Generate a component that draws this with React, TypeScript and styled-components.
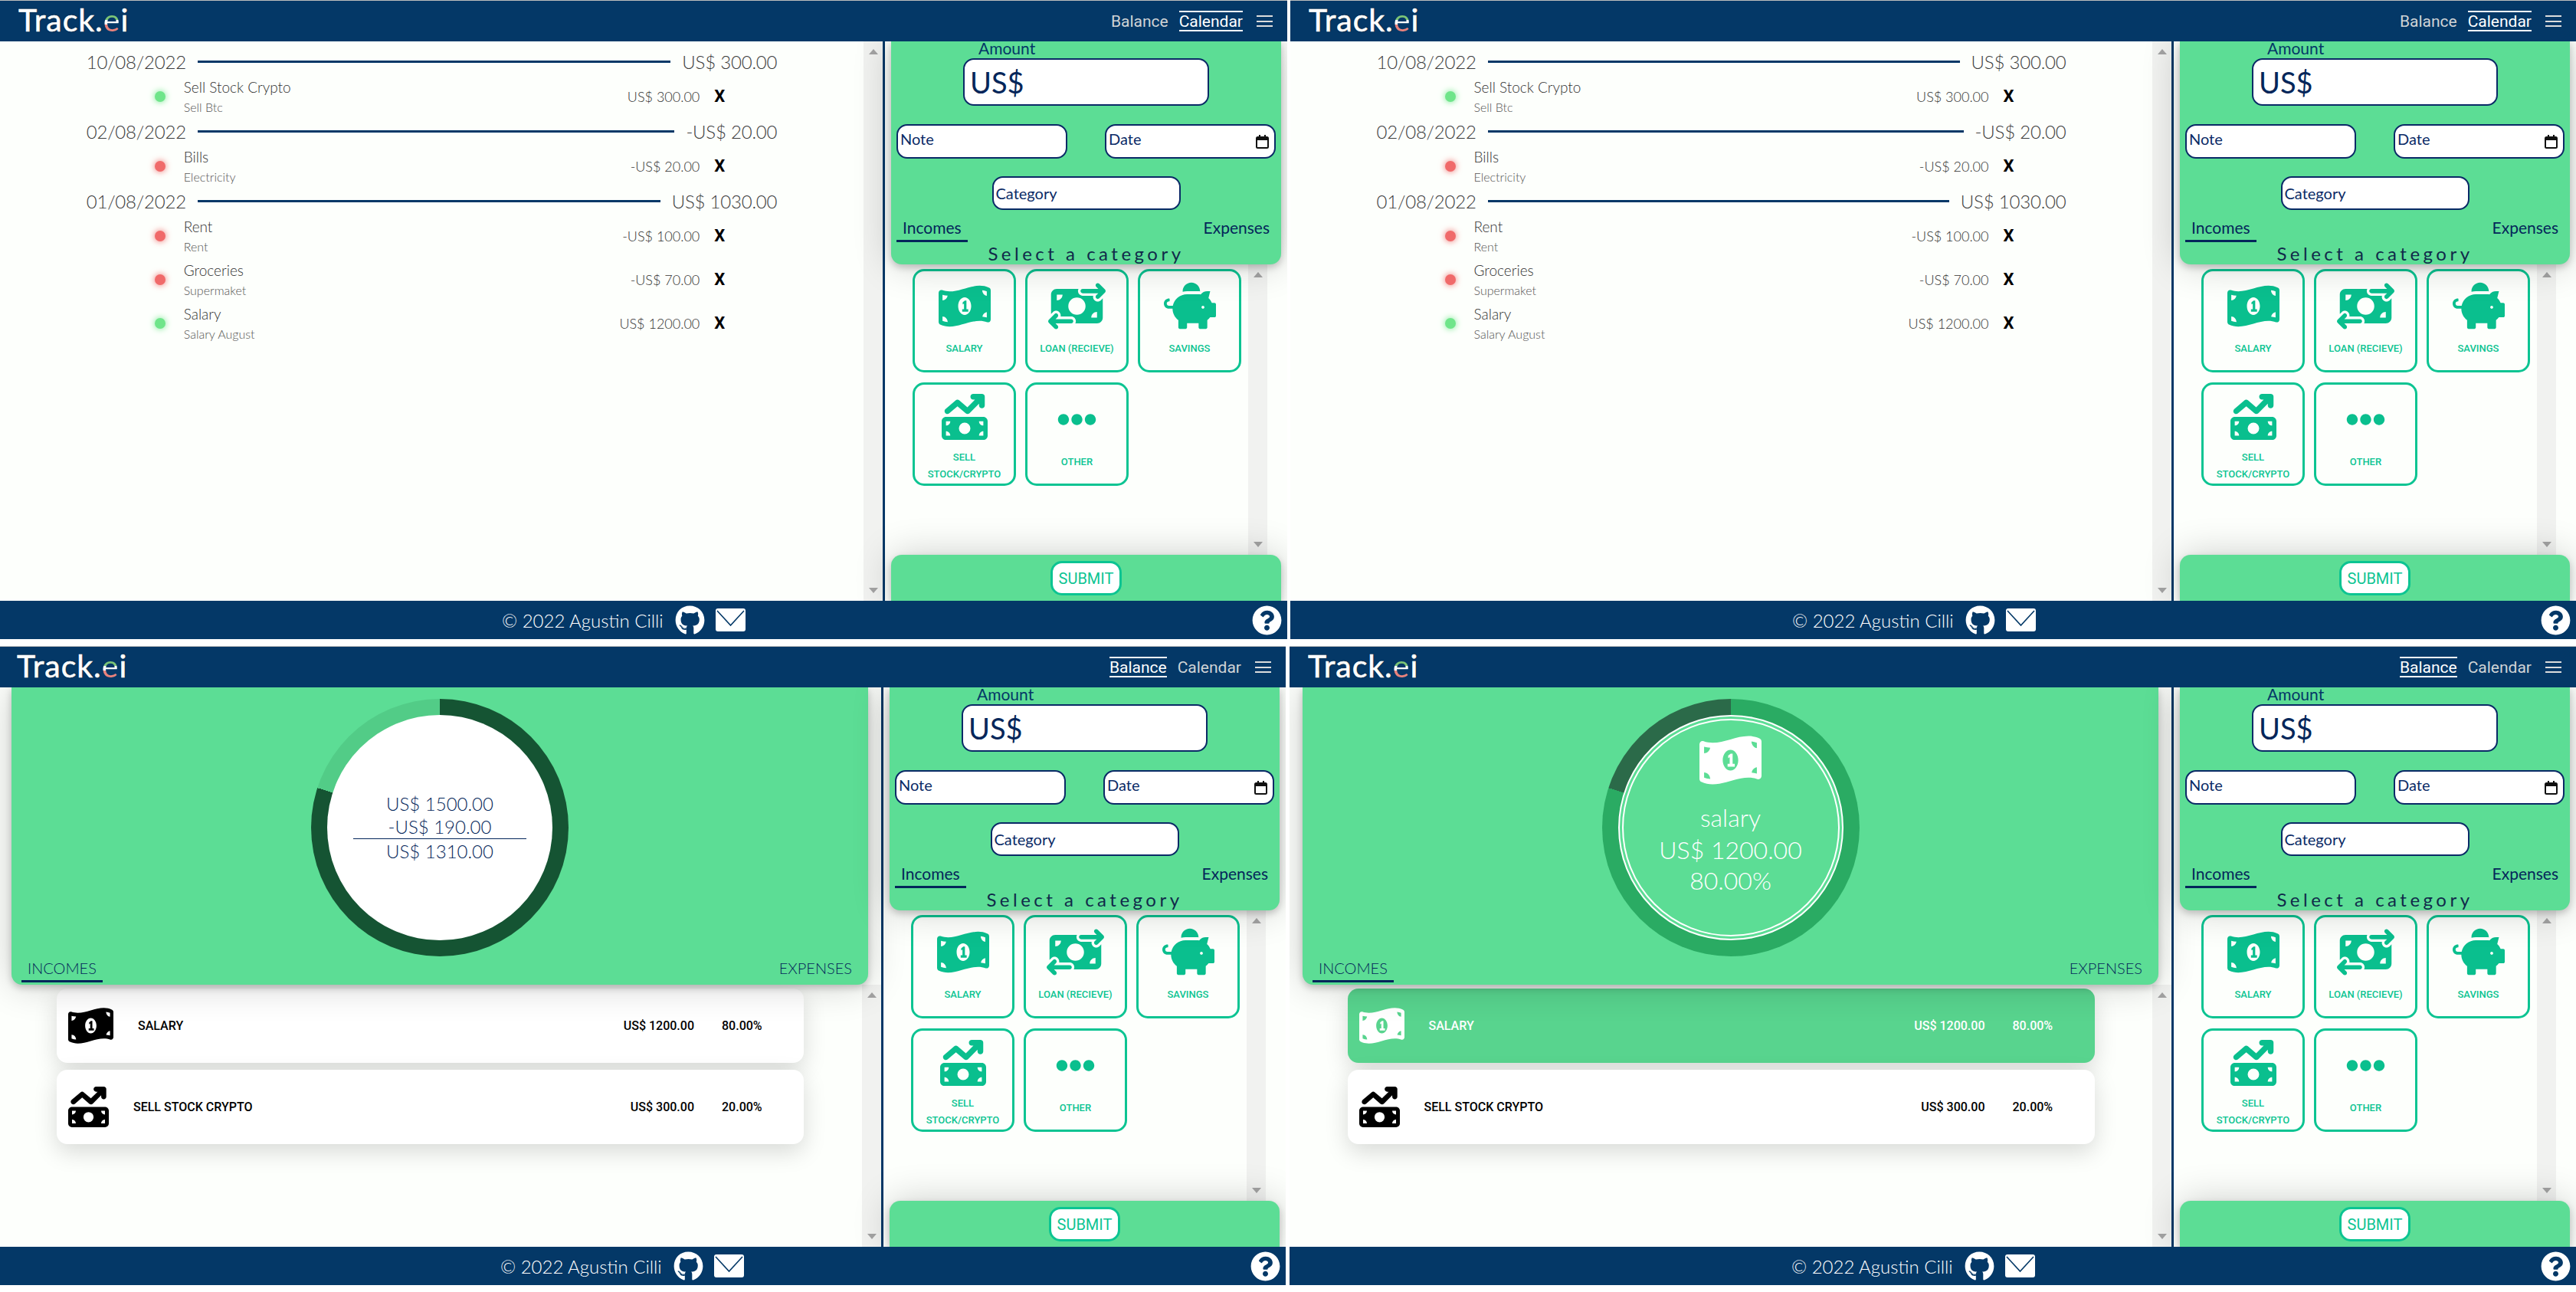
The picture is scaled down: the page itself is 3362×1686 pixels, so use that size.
import React from "react";
import styled, { createGlobalStyle } from "styled-components";
import { FaPiggyBank, FaEllipsisH, FaGithub, FaQuestionCircle } from "react-icons/fa";
import { FaMoneyBillTransfer, FaMoneyBillTrendUp } from "react-icons/fa6";

const NAVY = "#043867";
const INK = "#0a2a66";
const DEEP = "#04265a";
const GREEN = "#5cdd95";
const TEAL = "#0cc492";
const PAPER = "#fdfffc";
const SOFT = `"Lato", "Liberation Sans", sans-serif`;
const ROBOTO = `"Roboto", "Liberation Sans", sans-serif`;
const PANEL_SHADOW = "0 4px 10px rgba(0, 0, 0, 0.2), 0 0 50px rgba(0, 0, 0, 0.2)";

const Global = createGlobalStyle`
  html, body { margin: 0; padding: 0; background: #fff; overflow: hidden; }
  body { width: 3362px; height: 1686px; font-family: ${SOFT}; }
  * { box-sizing: border-box; }
`;

const Page = styled.div`
  width: 3362px;
  height: 1686px;
  display: flex;
  flex-direction: column;
  gap: 9px;
  overflow: hidden;
`;

const Row = styled.div<{ $columns: string; $gap: number; $shift: number }>`
  display: grid;
  grid-template-columns: ${(p) => p.$columns};
  column-gap: ${(p) => p.$gap}px;
  margin-left: ${(p) => p.$shift}px;
`;

const Screen = styled.section`
  height: 834px;
  border-top: 1px solid #bdbdbd;
  display: flex;
  flex-direction: column;
  background: ${PAPER};
  overflow: hidden;
`;

const Header = styled.header`
  height: 53px;
  flex: none;
  background: ${NAVY};
  display: flex;
  align-items: center;
  padding: 0 19px 0 24px;
  position: relative;
  z-index: 3;
`;

const Logo = styled.div`
  font-family: "Lato", sans-serif;
  font-size: 41px;
  font-weight: 400;
  line-height: 50px;
  letter-spacing: 1px;
  color: #fff;
  -webkit-text-stroke: 0.6px #fff;
  text-shadow: 0 0 2px #111;
  margin-top: -4px;
`;

const LogoE = styled.span`
  background: linear-gradient(#7cc576 0 52%, #fff 52% 64%, #e8827c 64% 100%);
  -webkit-background-clip: text;
  background-clip: text;
  color: transparent;
  -webkit-text-stroke: 0;
  text-shadow: none;
`;

const Nav = styled.nav`
  margin-left: auto;
  display: flex;
  align-items: center;
  font-family: ${ROBOTO};
  font-size: 21px;
`;

const NavLink = styled.a<{ $on?: boolean }>`
  height: 27px;
  display: flex;
  align-items: center;
  margin-left: 14px;
  color: ${(p) => (p.$on ? "#fff" : "#cfd3d6")};
  border-top: 2px solid ${(p) => (p.$on ? "#fff" : "transparent")};
  border-bottom: 2px solid ${(p) => (p.$on ? "#fff" : "transparent")};
`;

const Burger = styled.div`
  width: 21px;
  height: 15px;
  margin-left: 18px;
  border-top: 2px solid #dcdcdc;
  border-bottom: 2px solid #dcdcdc;
  position: relative;
  &::after {
    content: "";
    position: absolute;
    left: 0;
    right: 0;
    top: 4.5px;
    height: 2px;
    background: #dcdcdc;
  }
`;

const Main = styled.main`
  flex: 1;
  min-height: 0;
  display: flex;
`;

const LeftCol = styled.div`
  flex: 1;
  min-width: 0;
  display: flex;
  flex-direction: column;
`;

const Scroller = styled.div`
  flex: 1;
  min-height: 0;
  display: flex;
`;

const ScrollContent = styled.div`
  flex: 1;
  min-width: 0;
`;

const Track = styled.div<{ $margin?: number }>`
  width: 25px;
  flex: none;
  margin-right: ${(p) => p.$margin ?? 0}px;
  background: #f1f2f0;
  display: flex;
  flex-direction: column;
  justify-content: space-between;
  align-items: center;
  padding: 10px 0;
`;

const Arrow = styled.i<{ $down?: boolean }>`
  width: 0;
  height: 0;
  border-left: 6px solid transparent;
  border-right: 6px solid transparent;
  ${(p) => (p.$down ? "border-top: 7px solid #a3a3a3;" : "border-bottom: 7px solid #a3a3a3;")}
`;

const CalendarList = styled.div`
  width: 80%;
  margin: 9px auto 0;
`;

const DateRow = styled.div`
  height: 34px;
  display: flex;
  align-items: center;
  gap: 15px;
  font-size: 24px;
  letter-spacing: -0.2px;
  font-weight: 300;
  color: #3c3c3c;
`;

const DateLine = styled.span`
  flex: 1;
  height: 3px;
  background: ${NAVY};
`;

const Item = styled.div`
  height: 57px;
  display: flex;
  align-items: center;
  padding: 0 67px 0 89px;
`;

const Dot = styled.span<{ $income: boolean }>`
  width: 14px;
  height: 14px;
  border-radius: 50%;
  background: ${(p) => (p.$income ? "#6fe58a" : "#f06a6a")};
  box-shadow: 0 0 8px ${(p) => (p.$income ? "#6fe58a" : "#f06a6a")};
  margin-right: 24px;
`;

const ItemText = styled.div`
  padding-top: 3px;
`;

const ItemTitle = styled.div`
  font-size: 19px;
  line-height: 26px;
  font-weight: 300;
  color: #333;
`;

const ItemNote = styled.div`
  font-size: 16px;
  line-height: 26px;
  font-weight: 300;
  color: #555;
`;

const ItemAmount = styled.div`
  margin-left: auto;
  font-size: 18px;
  font-weight: 300;
  color: #333;
`;

const Remove = styled.span`
  width: 16px;
  margin-left: 18px;
  text-align: center;
  font-family: ${ROBOTO};
  font-size: 22px;
  font-weight: 700;
  color: #000;
`;

const Summary = styled.div`
  height: 388px;
  flex: none;
  margin: 0 17px;
  background: ${GREEN};
  border-radius: 0 0 14px 14px;
  box-shadow: ${PANEL_SHADOW};
  display: flex;
  flex-direction: column;
  align-items: center;
  padding: 15px 0 3px;
  position: relative;
  z-index: 2;
`;

const Donut = styled.div<{ $main: string; $rest: string }>`
  width: 336px;
  height: 336px;
  flex: none;
  padding: 21px;
  border-radius: 50%;
  background: conic-gradient(${(p) => p.$main} 0 80%, ${(p) => p.$rest} 80% 100%);
`;

const Disc = styled.div`
  width: 100%;
  height: 100%;
  border-radius: 50%;
  background: #fff;
  color: ${DEEP};
  display: flex;
  flex-direction: column;
  align-items: center;
  justify-content: center;
  font-size: 24px;
  font-weight: 300;
  line-height: 30px;
`;

const Balance = styled.div`
  width: 226px;
  text-align: center;
  border-bottom: 1px solid ${DEEP};
  margin-bottom: 1px;
`;

const SelectedDisc = styled.div`
  width: 100%;
  height: 100%;
  border-radius: 50%;
  background: ${GREEN};
  border: 2px solid #fff;
  padding: 3px;
`;

const SelectedInner = styled.div`
  width: 100%;
  height: 100%;
  border-radius: 50%;
  border: 2px solid #fff;
  color: #fff;
  display: flex;
  flex-direction: column;
  align-items: center;
  font-size: 32px;
  font-weight: 300;
  line-height: 40px;
  padding-top: 16px;
`;

const SelectedName = styled.div`
  margin: 19px 0 2px;
`;

const Tabs = styled.div<{ $inset: number }>`
  width: 100%;
  margin-top: auto;
  display: flex;
  justify-content: space-between;
  padding: 0 ${(p) => p.$inset}px;
`;

const Tab = styled.div<{ $on?: boolean; $size: number; $weight: number }>`
  height: 33px;
  padding: 0 8px;
  font-size: ${(p) => p.$size}px;
  font-weight: ${(p) => p.$weight};
  line-height: 28px;
  color: ${DEEP};
  border-bottom: 3px solid ${(p) => (p.$on ? DEEP : "transparent")};
`;

const Cards = styled.div`
  width: 975px;
  margin: 5px auto 0;
  display: flex;
  flex-direction: column;
  gap: 9px;
`;

const Card = styled.div<{ $on?: boolean }>`
  height: 97px;
  padding: 0 52px 0 15px;
  display: flex;
  align-items: center;
  gap: 32px;
  border-radius: 14px;
  background: ${(p) => (p.$on ? "#58d48e" : "#fff")};
  color: ${(p) => (p.$on ? "#fff" : "#000")};
  box-shadow: 0 10px 30px rgba(0, 0, 0, 0.15);
  font-family: ${ROBOTO};
  font-size: 16px;
  font-weight: 500;
`;

const CardValue = styled.span`
  margin-left: auto;
`;

const CardPercent = styled.span`
  width: 55px;
  margin-left: 4px;
`;

const FormCol = styled.div`
  width: 528px;
  flex: none;
  border-left: 3px solid ${NAVY};
  display: flex;
  flex-direction: column;
`;

const FormTop = styled.div`
  height: 291px;
  flex: none;
  margin: 0 8px;
  padding: 0 7px;
  background: ${GREEN};
  border-radius: 0 0 14px 14px;
  box-shadow: ${PANEL_SHADOW};
  position: relative;
  z-index: 2;
  display: flex;
  flex-direction: column;
  color: ${INK};
`;

const AmountLabel = styled.div`
  margin-left: 107px;
  font-size: 21px;
  line-height: 18px;
  color: ${NAVY};
  font-weight: 400;
`;

const Field = styled.div<{ $w: number; $h: number; $size: number }>`
  width: ${(p) => p.$w}px;
  height: ${(p) => p.$h}px;
  flex: none;
  background: #fff;
  border: 2px solid ${INK};
  border-radius: 14px;
  font-size: ${(p) => p.$size}px;
  display: flex;
  align-items: center;
  padding: 0 7px 0 3px;
  color: ${INK};
`;

const AmountField = styled(Field)`
  margin: 4px auto 0;
  padding-left: 7px;
  color: ${DEEP};
`;

const FieldRow = styled.div`
  display: flex;
  justify-content: space-between;
  margin-top: 24px;
`;

const RaisedText = styled.span`
  margin-top: -8px;
`;

const CalendarIcon = styled.svg`
  margin-left: auto;
  width: 17px;
  height: 18px;
`;

const CategoryField = styled(Field)`
  margin: 23px auto 0;
  padding-left: 3px;
`;

const SelectTitle = styled.div`
  margin-top: 5px;
  height: 24px;
  line-height: 20px;
  text-align: center;
  font-size: 24px;
  letter-spacing: 4.5px;
  color: #102a4a;
`;

const Categories = styled.div`
  flex: 1;
  min-height: 0;
  display: flex;
`;

const CategoryGrid = styled.div`
  flex: 1;
  display: grid;
  grid-template-columns: repeat(3, 135px);
  grid-auto-rows: 135px;
  gap: 13px 12px;
  padding: 6px 0 0 36px;
`;

const Category = styled.div`
  border: 3px solid ${TEAL};
  border-radius: 15px;
  display: flex;
  flex-direction: column;
  align-items: center;
  color: ${TEAL};
  font-family: ${ROBOTO};
  font-size: 13px;
  font-weight: 500;
  line-height: 22px;
  text-align: center;
`;

const CategoryIcon = styled.div<{ $h: number }>`
  height: ${(p) => p.$h}px;
  flex: none;
  display: flex;
  align-items: center;
  justify-content: center;
  color: #0abf8e;
`;

const CategoryLabel = styled.span`
  padding: 0 12px;
`;

const FormBottom = styled.div`
  height: 60px;
  flex: none;
  margin: 0 8px;
  background: ${GREEN};
  border-radius: 14px 14px 0 0;
  box-shadow: ${PANEL_SHADOW};
  position: relative;
  z-index: 2;
  display: flex;
  justify-content: center;
  padding-top: 8px;
`;

const Submit = styled.button`
  width: 93px;
  height: 45px;
  background: #fff;
  border: 3px solid ${TEAL};
  border-radius: 15px;
  padding: 0;
  color: ${TEAL};
  font-family: ${ROBOTO};
  font-size: 20px;
`;

const Footer = styled.footer`
  height: 50px;
  flex: none;
  background: ${NAVY};
  position: relative;
  z-index: 3;
  display: flex;
  align-items: center;
  padding: 0 7px 0 655px;
  color: #fff;
  font-size: 24px;
  font-weight: 300;
`;

const Copyright = styled.span`
  margin-right: 15px;
`;

const MailLink = styled.a`
  margin-left: 14px;
  display: flex;
`;

const HelpLink = styled.a`
  margin-left: auto;
  display: flex;
`;

function MoneyWave({ size }: { size: number }) {
  return (
    <svg width={size} height={Math.round(size * 0.89)} viewBox="0 0 640 512" preserveAspectRatio="none" fill="currentColor">
      <path d="M621.16 54.46C582.37 38.19 543.55 32 504.75 32c-123.17-.01-246.33 62.34-369.5 62.34-30.89 0-61.76-3.92-92.65-13.72-3.47-1.1-6.95-1.62-10.35-1.62C15.04 79 0 92.32 0 110.81v317.26c0 12.63 7.23 24.6 18.84 29.46C57.63 473.81 96.45 480 135.25 480c123.17 0 246.34-62.35 369.51-62.35 30.89 0 61.76 3.92 92.65 13.72 3.47 1.1 6.95 1.62 10.35 1.62 17.21 0 32.25-13.32 32.25-31.81V83.93c-.01-12.64-7.24-24.6-18.85-29.47zM48 132.22c20.12 5.04 41.12 7.57 62.72 8.93C104.84 170.54 79 192.69 48 192.69v-60.47zm0 285v-47.78c34.37 0 62.18 27.27 63.71 61.4-22.53-1.81-43.59-6.31-63.71-13.62zM320 352c-44.19 0-80-42.99-80-96 0-53.02 35.82-96 80-96s80 42.98 80 96c0 53.03-35.83 96-80 96zm272 27.78c-17.52-4.39-35.71-6.85-54.32-8.44 5.87-26.08 27.5-45.88 54.32-49.28v57.72zm0-236.11c-30.89-3.91-54.86-29.7-55.81-61.55 19.54 2.17 38.09 6.23 55.81 12.66v48.89z" />
      <path d="M296 214l26-18h20v94h22v26h-74v-26h22v-62l-16 10z" />
    </svg>
  );
}

function Mail() {
  return (
    <svg width={39} height={30} viewBox="0 0 39 30">
      <rect width="39" height="30" rx="3" fill="#fff" />
      <path d="M2 3 L19.5 22 L37 3" fill="none" stroke={NAVY} strokeWidth="1.6" />
    </svg>
  );
}

type Cat = { label: string; icon: React.ReactNode; h: number };
const CATS: Cat[] = [
  { label: "SALARY", icon: <MoneyWave size={68} />, h: 90 },
  { label: "LOAN (RECIEVE)", icon: <FaMoneyBillTransfer size={75} />, h: 90 },
  { label: "SAVINGS", icon: <FaPiggyBank size={68} />, h: 90 },
  { label: "SELL STOCK/CRYPTO", icon: <FaMoneyBillTrendUp size={60} />, h: 84 },
  { label: "OTHER", icon: <FaEllipsisH size={51} />, h: 90 },
];

const DAYS = [
  {
    date: "10/08/2022",
    total: "US$ 300.00",
    items: [{ t: "Sell Stock Crypto", n: "Sell Btc", a: "US$ 300.00", inc: true }],
  },
  {
    date: "02/08/2022",
    total: "-US$ 20.00",
    items: [{ t: "Bills", n: "Electricity", a: "-US$ 20.00", inc: false }],
  },
  {
    date: "01/08/2022",
    total: "US$ 1030.00",
    items: [
      { t: "Rent", n: "Rent", a: "-US$ 100.00", inc: false },
      { t: "Groceries", n: "Supermaket", a: "-US$ 70.00", inc: false },
      { t: "Salary", n: "Salary August", a: "US$ 1200.00", inc: true },
    ],
  },
];

function Bar() {
  return (
    <Track>
      <Arrow />
      <Arrow $down />
    </Track>
  );
}

function Calendar() {
  return (
    <Scroller>
      <ScrollContent>
        <CalendarList>
          {DAYS.map((d) => (
            <div key={d.date}>
              <DateRow>
                <span>{d.date}</span>
                <DateLine />
                <span>{d.total}</span>
              </DateRow>
              {d.items.map((i) => (
                <Item key={i.t}>
                  <Dot $income={i.inc} />
                  <ItemText>
                    <ItemTitle>{i.t}</ItemTitle>
                    <ItemNote>{i.n}</ItemNote>
                  </ItemText>
                  <ItemAmount>{i.a}</ItemAmount>
                  <Remove>X</Remove>
                </Item>
              ))}
            </div>
          ))}
        </CalendarList>
      </ScrollContent>
      <Bar />
    </Scroller>
  );
}

function BalanceView({ selected }: { selected: boolean }) {
  return (
    <>
      <Summary>
        {selected ? (
          <Donut $main="#2aab63" $rest="#2b6a49">
            <SelectedDisc>
              <SelectedInner>
                <MoneyWave size={81} />
                <SelectedName>salary</SelectedName>
                <div>US$ 1200.00</div>
                <div>80.00%</div>
              </SelectedInner>
            </SelectedDisc>
          </Donut>
        ) : (
          <Donut $main="#155433" $rest="#52cc87">
            <Disc>
              <div>US$ 1500.00</div>
              <Balance>-US$ 190.00</Balance>
              <div>US$ 1310.00</div>
            </Disc>
          </Donut>
        )}
        <Tabs $inset={13}>
          <Tab $on $size={20} $weight={300}>INCOMES</Tab>
          <Tab $size={20} $weight={300}>EXPENSES</Tab>
        </Tabs>
      </Summary>
      <Scroller>
        <ScrollContent>
          <Cards>
            <Card $on={selected}>
              <MoneyWave size={59} />
              <span>SALARY</span>
              <CardValue>US$ 1200.00</CardValue>
              <CardPercent>80.00%</CardPercent>
            </Card>
            <Card>
              <FaMoneyBillTrendUp size={53} />
              <span>SELL STOCK CRYPTO</span>
              <CardValue>US$ 300.00</CardValue>
              <CardPercent>20.00%</CardPercent>
            </Card>
          </Cards>
        </ScrollContent>
        <Bar />
      </Scroller>
    </>
  );
}

function Form() {
  return (
    <FormCol>
      <FormTop>
        <AmountLabel>Amount</AmountLabel>
        <AmountField $w={321} $h={62} $size={38}>US$</AmountField>
        <FieldRow>
          <Field $w={223} $h={45} $size={20}>
            <RaisedText>Note</RaisedText>
          </Field>
          <Field $w={223} $h={45} $size={20}>
            <RaisedText>Date</RaisedText>
            <CalendarIcon viewBox="0 0 17 18" fill="none">
              <rect x="1" y="3" width="15" height="14" rx="1.5" stroke="#111" strokeWidth="2" />
              <rect x="1" y="3" width="15" height="4" fill="#111" />
              <rect x="4" y="0" width="2" height="4" fill="#111" />
              <rect x="11" y="0" width="2" height="4" fill="#111" />
            </CalendarIcon>
          </Field>
        </FieldRow>
        <CategoryField $w={246} $h={44} $size={20}>Category</CategoryField>
        <Tabs $inset={0}>
          <Tab $on $size={21} $weight={400}>Incomes</Tab>
          <Tab $size={21} $weight={400}>Expenses</Tab>
        </Tabs>
        <SelectTitle>Select a category</SelectTitle>
      </FormTop>
      <Categories>
        <CategoryGrid>
          {CATS.map((c) => (
            <Category key={c.label}>
              <CategoryIcon $h={c.h}>{c.icon}</CategoryIcon>
              <CategoryLabel>{c.label}</CategoryLabel>
            </Category>
          ))}
        </CategoryGrid>
        <Track $margin={26}>
          <Arrow />
          <Arrow $down />
        </Track>
      </Categories>
      <FormBottom>
        <Submit>SUBMIT</Submit>
      </FormBottom>
    </FormCol>
  );
}

function Shell({ view }: { view: "calendar" | "balance" | "selected" }) {
  const isCal = view === "calendar";
  return (
    <Screen>
      <Header>
        <Logo>
          Track.<LogoE>e</LogoE>i
        </Logo>
        <Nav>
          <NavLink $on={!isCal}>Balance</NavLink>
          <NavLink $on={isCal}>Calendar</NavLink>
          <Burger />
        </Nav>
      </Header>
      <Main>
        <LeftCol>{isCal ? <Calendar /> : <BalanceView selected={view === "selected"} />}</LeftCol>
        <Form />
      </Main>
      <Footer>
        <Copyright>© 2022 Agustin Cilli</Copyright>
        <FaGithub size={39} color="#fff" />
        <MailLink>
          <Mail />
        </MailLink>
        <HelpLink>
          <FaQuestionCircle size={39} color="#fff" />
        </HelpLink>
      </Footer>
    </Screen>
  );
}

export default function App() {
  return (
    <>
      <Global />
      <Page>
        <Row $columns="1680px 1678px" $gap={4} $shift={0}>
          <Shell view="calendar" />
          <Shell view="calendar" />
        </Row>
        <Row $columns="1680px 1679px" $gap={5} $shift={-2}>
          <Shell view="balance" />
          <Shell view="selected" />
        </Row>
      </Page>
    </>
  );
}
